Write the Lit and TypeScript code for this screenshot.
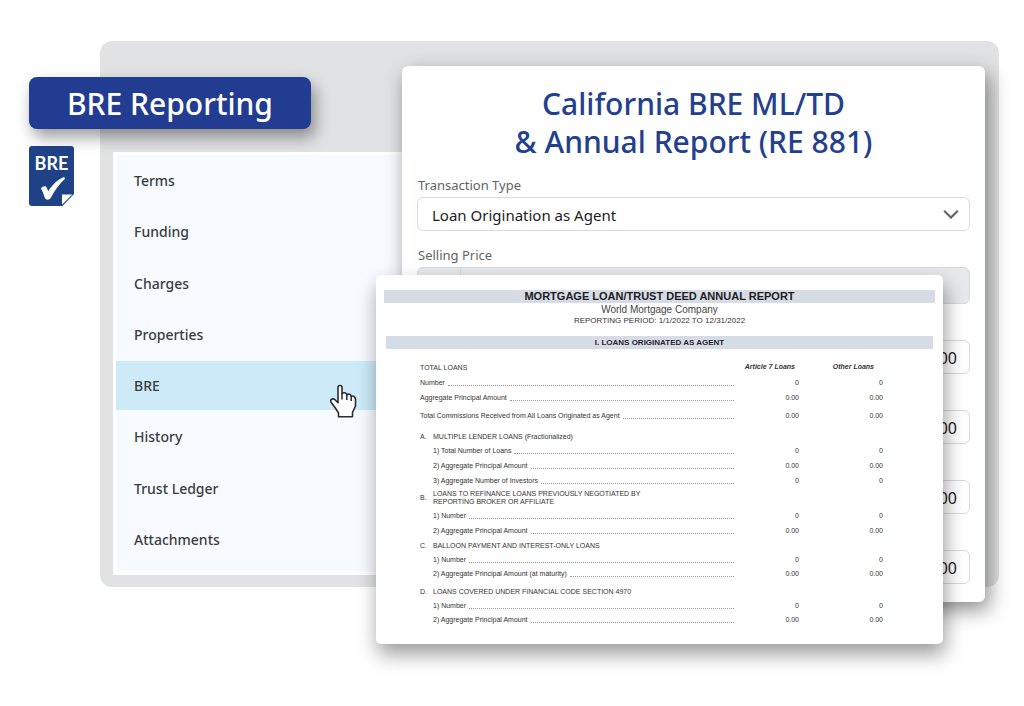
import { LitElement, html, css, svg } from "lit";
import { customElement, property } from "lit/decorators.js";
import { classMap } from "lit/directives/class-map.js";

const MENU = ["Terms", "Funding", "Charges", "Properties", "BRE", "History", "Trust Ledger", "Attachments"];

interface Line {
  label: string;
  value: string;
  kind: string;
}
interface Section {
  letter: string;
  title: string[];
  kind: string;
  lines: Line[];
}

const TOTALS: Line[] = [
  { label: "Number", value: "0", kind: "h15" },
  { label: "Aggregate Principal Amount", value: "0.00", kind: "h15" },
  { label: "Total Commissions Received from All Loans Originated as Agent", value: "0.00", kind: "h18" },
];

const SECTIONS: Section[] = [
  {
    letter: "A.",
    title: ["MULTIPLE LENDER LOANS (Fractionalized)"],
    kind: "h21",
    lines: [
      { label: "1) Total Number of Loans", value: "0", kind: "h14" },
      { label: "2) Aggregate Principal Amount", value: "0.00", kind: "h15" },
      { label: "3) Aggregate Number of Investors", value: "0", kind: "h15" },
    ],
  },
  {
    letter: "B.",
    title: ["LOANS TO REFINANCE LOANS PREVIOUSLY NEGOTIATED BY", "REPORTING BROKER OR AFFILIATE"],
    kind: "h21",
    lines: [
      { label: "1) Number", value: "0", kind: "h14" },
      { label: "2) Aggregate Principal Amount", value: "0.00", kind: "h15" },
    ],
  },
  {
    letter: "C.",
    title: ["BALLOON PAYMENT AND INTEREST-ONLY LOANS"],
    kind: "h15",
    lines: [
      { label: "1) Number", value: "0", kind: "h14" },
      { label: "2) Aggregate Principal Amount (at maturity)", value: "0.00", kind: "h14" },
    ],
  },
  {
    letter: "D.",
    title: ["LOANS COVERED UNDER FINANCIAL CODE SECTION 4970"],
    kind: "h18",
    lines: [
      { label: "1) Number", value: "0", kind: "h14" },
      { label: "2) Aggregate Principal Amount", value: "0.00", kind: "h14" },
    ],
  },
];

@customElement("side-menu")
export class SideMenu extends LitElement {
  @property() current = "BRE";

  static styles = css`
    :host {
      display: block;
      box-sizing: border-box;
      background: #fff;
      padding: 3px 0 3px 3px;
    }
    nav {
      height: 100%;
    }
    ul {
      box-sizing: border-box;
      height: 100%;
      list-style: none;
      margin: 0;
      padding: 1px 0 8px;
      background: #f7fbff;
      display: flex;
      flex-direction: column;
      justify-content: space-between;
    }
    .link {
      display: block;
      padding: 15px 18px 14px;
      font: 500 14px/20px "Noto Sans", sans-serif;
      color: #3a3b40;
      text-decoration: none;
    }
    .active {
      background: #cdeaf8;
    }
  `;

  render() {
    return html`<nav>
      <ul>
        ${MENU.map(
          (item) => html`<li>
            <a href="#" class=${classMap({ link: true, active: item === this.current })}>${item}</a>
          </li>`
        )}
      </ul>
    </nav>`;
  }
}

@customElement("loan-form")
export class LoanForm extends LitElement {
  static styles = css`
    :host {
      display: block;
      box-sizing: border-box;
      background: #fff;
      border-radius: 6px;
      padding: 19px 15px;
      box-shadow: 4px 8px 20px rgba(0, 0, 0, 0.45);
      font-family: "Noto Sans", sans-serif;
    }
    h1 {
      margin: 0 0 12px;
      font-size: 30px;
      line-height: 38px;
      font-weight: 500;
      text-align: center;
      color: #23408f;
    }
    .caption {
      display: block;
      padding: 0 1px;
      font-size: 13px;
      line-height: 24px;
      color: #636363;
    }
    .box {
      display: flex;
      align-items: center;
      position: relative;
      box-sizing: border-box;
      height: 34px;
      margin-bottom: 12px;
      border: 1px solid #d9dadd;
      border-radius: 6px;
      overflow: hidden;
    }
    .tall {
      height: 37px;
      margin-bottom: 36px;
      background: #e5e9ec;
    }
    .amount {
      margin-bottom: 36px;
    }
    .prefix {
      width: 42px;
      height: 100%;
      border-right: 1px solid #d0d3d8;
    }
    select,
    input {
      appearance: none;
      flex: 1;
      min-width: 0;
      height: 100%;
      margin: 0;
      border: 0;
      background: transparent;
      color: #1c1c1c;
      font: 15px/20px "Noto Sans", sans-serif;
      padding: 2px 12px 0 14px;
    }
    .amount input {
      font-size: 16px;
      text-align: right;
    }
    .chevron {
      position: absolute;
      right: 10px;
      width: 16px;
      height: 10px;
      pointer-events: none;
    }
  `;

  render() {
    return html`
      <h1>California BRE ML/TD<br />&amp; Annual Report (RE 881)</h1>
      <label class="caption" for="type">Transaction Type</label>
      <div class="box">
        <select id="type">
          <option>Loan Origination as Agent</option>
        </select>
        <svg class="chevron" viewBox="0 0 16 10">
          <path d="M1.200 1.800 8 8.600l6.800-6.800" fill="none" stroke="#66676a" stroke-width="2.200" />
        </svg>
      </div>
      <label class="caption" for="price">Selling Price</label>
      <div class="box tall">
        <span class="prefix"></span>
        <input id="price" />
      </div>
      ${[1, 2, 3, 4].map(
        (n) => html`<div class="box amount"><input aria-label="Amount ${n}" value="0.00" /></div>`
      )}
    `;
  }
}

@customElement("annual-report")
export class AnnualReport extends LitElement {
  static styles = css`
    :host {
      display: block;
      box-sizing: border-box;
      background: #fff;
      border-radius: 5px;
      padding: 15px 8px 20px;
      box-shadow: 2px 10px 20px rgba(0, 0, 0, 0.4);
      font: 7px/8px "Liberation Sans", sans-serif;
      color: #333;
    }
    h2,
    h3,
    p {
      margin: 0;
      text-align: center;
    }
    h2 {
      background: #d6dce6;
      font-size: 11px;
      line-height: 13px;
      color: #1d1d22;
    }
    .company {
      font-size: 10px;
      line-height: 13px;
      color: #444;
    }
    .period {
      font-size: 8px;
      line-height: 9px;
    }
    h3 {
      margin: 11px 2px 9px;
      background: #d6dce6;
      font-size: 8px;
      line-height: 13px;
      color: #26262b;
    }
    table {
      border-collapse: collapse;
      width: calc(100% - 88px);
      margin-left: 36px;
      table-layout: fixed;
    }
    th,
    td {
      box-sizing: border-box;
      padding: 0;
      font-weight: 400;
      text-align: left;
      vertical-align: bottom;
    }
    .first {
      width: 65px;
    }
    .second {
      width: 84px;
    }
    .num {
      text-align: right;
    }
    .head {
      font-weight: 700;
      font-style: italic;
      text-align: right;
      padding: 0 4px 1px 0;
    }
    .wide {
      padding-right: 9px;
    }
    .h14 {
      height: 14px;
    }
    .h15 {
      height: 15px;
    }
    .h18 {
      height: 18px;
    }
    .h21 {
      height: 21px;
    }
    .leader {
      display: flex;
      gap: 3px;
    }
    .leader::after {
      content: "";
      flex: 1;
      height: 6px;
      border-bottom: 1px dotted #999;
    }
    .sub {
      padding-left: 13px;
    }
    .section {
      display: grid;
      grid-template-columns: 13px 1fr;
      align-items: center;
    }
  `;

  private line(l: Line, sub: boolean) {
    return html`<tr class=${l.kind}>
      <td><div class=${classMap({ leader: true, sub })}>${l.label}</div></td>
      <td class="num">${l.value}</td>
      <td class="num">${l.value}</td>
    </tr>`;
  }

  render() {
    return html`
      <h2>MORTGAGE LOAN/TRUST DEED ANNUAL REPORT</h2>
      <p class="company">World Mortgage Company</p>
      <p class="period">REPORTING PERIOD: 1/1/2022 TO 12/31/2022</p>
      <h3>I. LOANS ORIGINATED AS AGENT</h3>
      <table>
        <thead>
          <tr class="h14">
            <th>TOTAL LOANS</th>
            <th class="head first">Article 7 Loans</th>
            <th class="head wide second">Other Loans</th>
          </tr>
        </thead>
        <tbody>
          ${TOTALS.map((l) => this.line(l, false))}
          ${SECTIONS.map(
            (s) => html`<tr class=${s.kind}>
                <th colspan="3">
                  <div class="section">
                    <span>${s.letter}</span>
                    <span>${s.title.map((t, i) => (i ? html`<br />${t}` : t))}</span>
                  </div>
                </th>
              </tr>
              ${s.lines.map((l) => this.line(l, true))}`
          )}
        </tbody>
      </table>
    `;
  }
}

const bookIcon = svg`
  <path d="M3 0H42a3 3 0 0 1 3 3V48L33.500 60H3a3 3 0 0 1-3-3V3a3 3 0 0 1 3-3Z" fill="#1f4286" />
  <path d="M33 48.500h10.300L33 58.800Z" fill="#fff" />
  <path d="M12 42.500c1.500-2.500 4.500-3 5.800-.8l1.400 3.600C23 39.500 28 34 34.300 31.300c1.600-.5 2.200.9 1.200 2C30 38.500 25.500 44.500 22 51.500c-1.200 2.600-5 3-6.300.3-.8-3-1.700-6-3.700-9.300Z" fill="#fff" />`;

const handIcon = svg`
  <path d="M8 15V3.500C8 .8 12 .8 12 3.500V9.500C13.500 8.200 16.500 8.500 16.800 10.800 18.500 9.600 20.800 10.200 21.200 12.300 23 11.500 25.500 12.500 25.500 15.500V22L22.500 28.500V32.800H8.500V29L5 23.500 1.200 18.500C-.3 15.800 2.200 14 4.500 15.300L8 18.700Z" fill="#fff" stroke="#2c2c2e" stroke-width="1.600" stroke-linejoin="round" />
  <path d="M12 9v6.500M16.800 10.500v5.500M21.200 12v5" fill="none" stroke="#2c2c2e" stroke-width="1.500" />`;

@customElement("app-root")
export class AppRoot extends LitElement {
  static styles = css`
    :host {
      display: block;
      min-height: 100vh;
      box-sizing: border-box;
      background: #fff;
      padding: 41px 25px 62px 100px;
    }
    .panel {
      position: relative;
      box-sizing: border-box;
      background: #e1e2e4;
      border-radius: 12px;
      padding: 111px 13px 12px;
    }
    side-menu {
      width: 290px;
      height: 423px;
    }
    .badge {
      position: absolute;
      left: -71px;
      top: 36px;
      padding: 7px 38px 5px;
      border-radius: 8px;
      background: #223c91;
      color: #fff;
      font: 500 30px/40px "Noto Sans", sans-serif;
      box-shadow: 4px 8px 16px rgba(0, 0, 0, 0.4);
    }
    .mark {
      position: absolute;
      left: -71px;
      top: 105px;
      width: 45px;
      height: 60px;
    }
    .mark-text {
      fill: #fff;
      font: 700 18px "Lato", sans-serif;
    }
    loan-form {
      position: absolute;
      left: 302px;
      right: 14px;
      top: 25px;
      bottom: -15px;
    }
    annual-report {
      position: absolute;
      left: 276px;
      right: 56px;
      top: 234px;
    }
    .hand {
      position: absolute;
      left: 230px;
      top: 343px;
      width: 27px;
      height: 34px;
    }
  `;

  render() {
    return html`<main class="panel">
      <side-menu></side-menu>
      <div class="badge">BRE Reporting</div>
      <svg class="mark" viewBox="0 0 45 60">
        ${bookIcon}
        <text class="mark-text" x="22.500" y="24" text-anchor="middle">BRE</text>
      </svg>
      <loan-form></loan-form>
      <annual-report></annual-report>
      <svg class="hand" viewBox="0 0 27 34">${handIcon}</svg>
    </main>`;
  }
}
